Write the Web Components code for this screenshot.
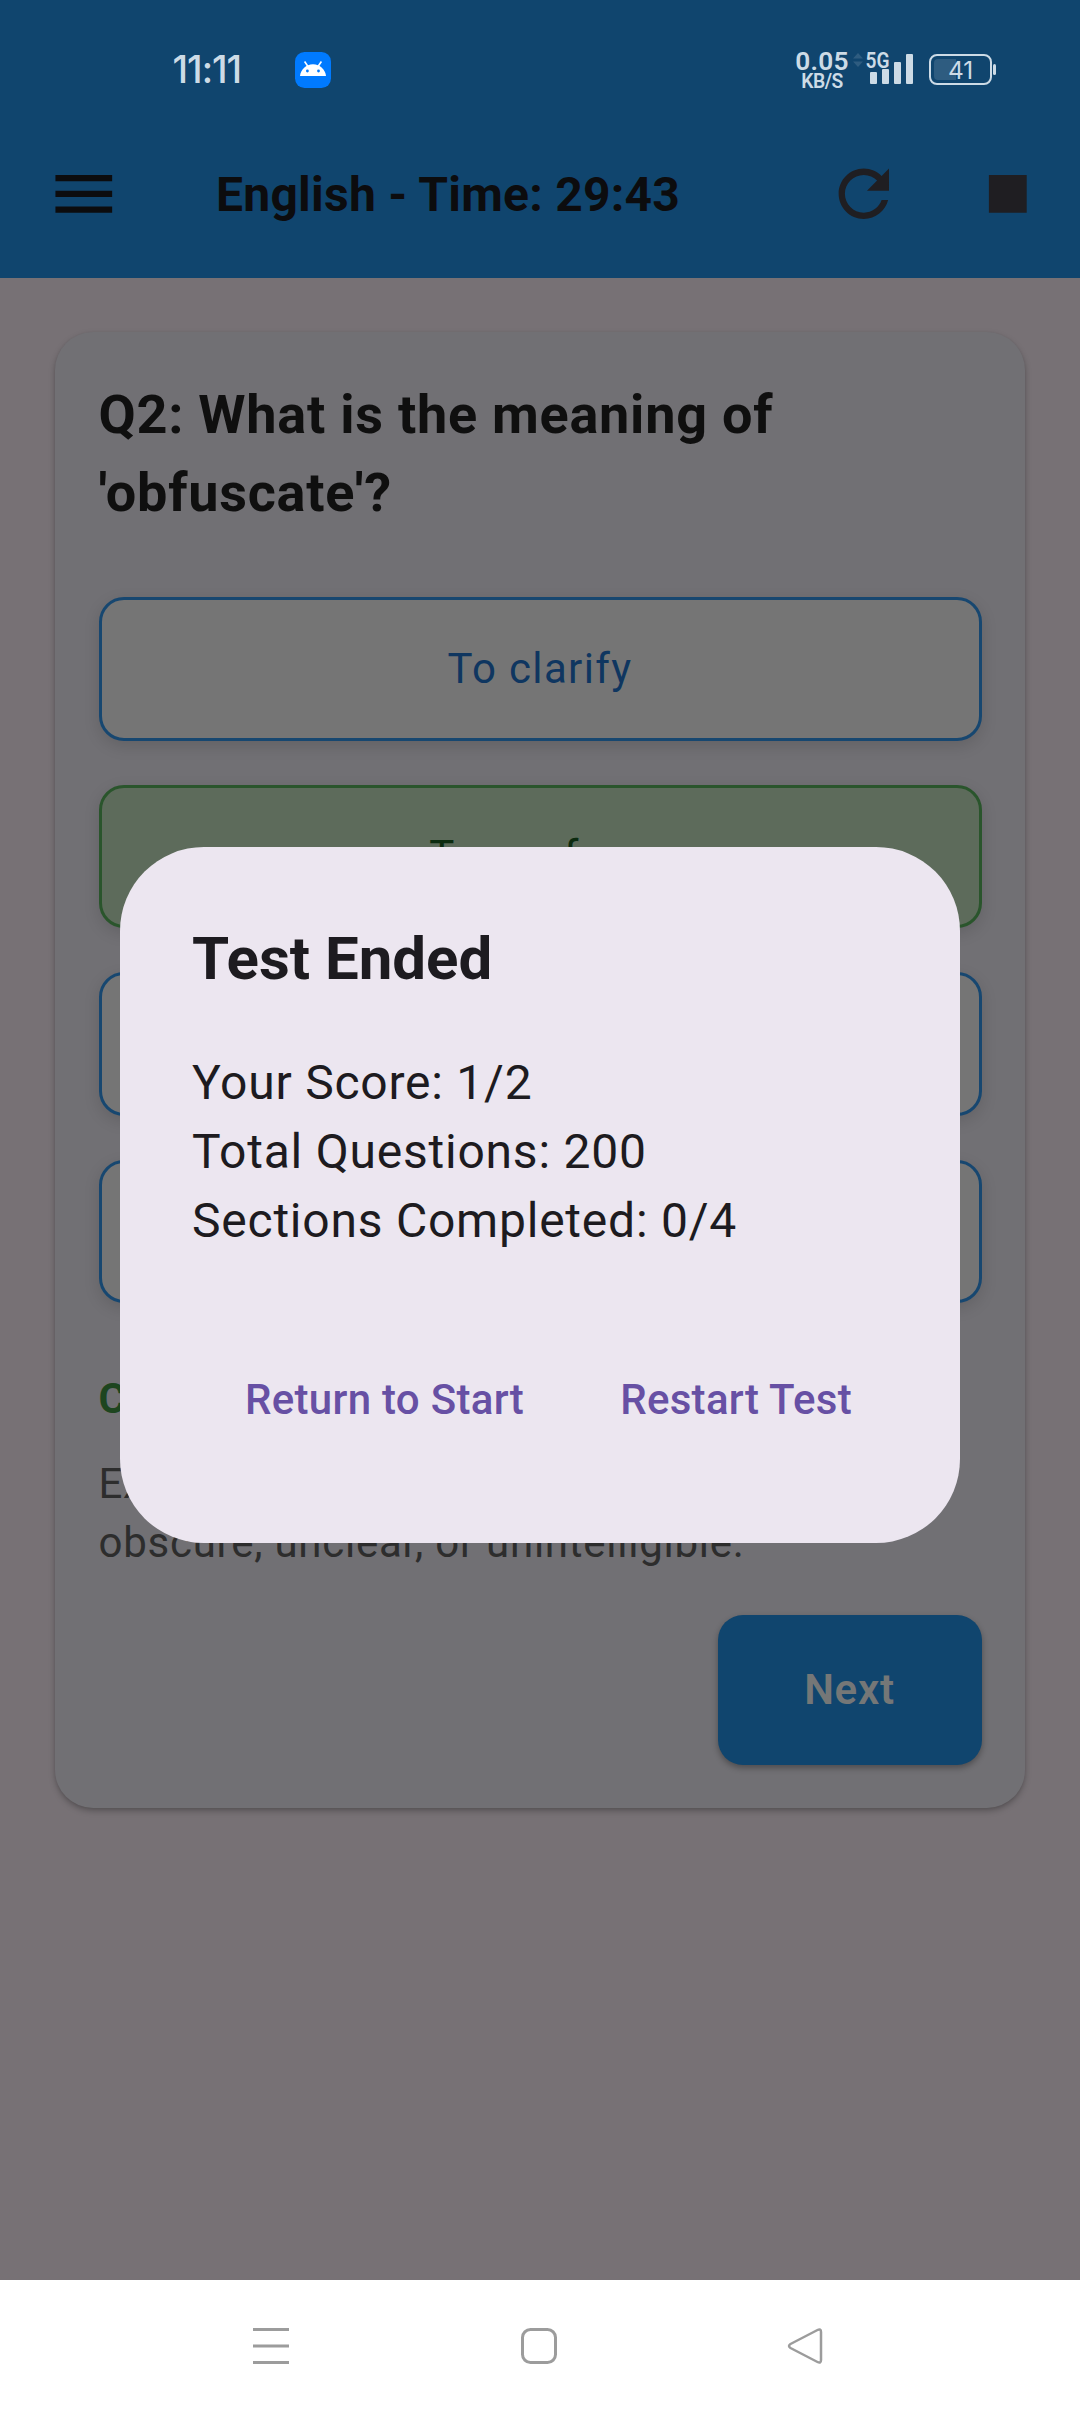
<!DOCTYPE html>
<html lang="en">
<head>
<meta charset="utf-8">
<title>English Test</title>
<style>
html, body { margin: 0; padding: 0; }
body { font-family: Roboto, "Liberation Sans", sans-serif; background: #777175; }
</style>
</head>
<body>
<quiz-screen></quiz-screen>
<script>
function define(name, html) {
  const template = document.createElement('template');
  template.innerHTML = html;
  customElements.define(name, class extends HTMLElement {
    constructor() {
      super();
      this.attachShadow({ mode: 'open' }).append(template.content.cloneNode(true));
    }
  });
}

define('status-bar', `
<style>
:host { display: flex; height: 118px; padding: 0 84px 0 172.500px; box-sizing: border-box; color: #cddbe6; align-items: flex-start; }
.time { font: 500 37.500px/44px Inter, sans-serif; letter-spacing: -1px; margin-top: 47.500px; width: 122.500px; white-space: nowrap; }
.app { width: 36px; height: 36px; margin-top: 51.500px; display: block; }
.speed { margin: 50px 0 0 auto; width: 52px; display: flex; flex-direction: column; align-items: center; font-weight: 600; }
.num { font-size: 26.300px; line-height: 22px; letter-spacing: .3px; }
.unit { font-size: 19.300px; line-height: 19px; letter-spacing: -.5px; font-weight: 600; }
.state { margin: 42px 0 0 4px; display: block; }
</style>
<span class="time">11:11</span>
<svg class="app" viewBox="0 0 36 36"><rect width="36" height="36" rx="9.500" fill="#007aff"/><path d="M5 24C5.700 17.500 11 12.300 18 12.300S30.300 17.500 31 24Z" fill="#fff"/><path d="M9.600 9.500l3.400 5M26.400 9.500l-3.400 5" stroke="#fff" stroke-width="1.600"/><circle cx="12.400" cy="19" r="1.400" fill="#007aff"/><circle cx="23.500" cy="19" r="1.400" fill="#007aff"/></svg>
<div class="speed"><span class="num">0.05</span><span class="unit">KB/S</span></div>
<svg class="state" width="144" height="50" viewBox="852 42 144 50" fill="#cddbe6">
  <path d="M853 58.500l5-5.500 5 5.500zM853 61.500l5 5.500 5-5.500z" fill="#2e5c80"/>
  <text x="865.600" y="67.600" font-size="22" font-weight="600" textLength="24" lengthAdjust="spacingAndGlyphs">5G</text>
  <rect x="870" y="72" width="7" height="12" rx="1"/><rect x="882" y="69" width="7" height="15" rx="1"/><rect x="894" y="62" width="7" height="22" rx="1"/><rect x="906" y="54" width="7" height="30" rx="1"/>
  <rect x="930" y="55" width="61" height="29" rx="7" fill="none" stroke="#cddbe6" stroke-width="2"/>
  <path d="M938 59h18v21h-18q-4 0-4-4v-13q0-4 4-4z" fill="#2e5c80"/>
  <rect x="993" y="64" width="3" height="11" rx="1.500"/>
  <text x="948" y="78.500" font-size="24.500" font-family="Inter, sans-serif">41</text>
</svg>`);

define('app-bar', `
<style>
:host { display: flex; align-items: center; height: 160px; padding: 0 34.500px 8px 46px; box-sizing: border-box; color: #1f1e22; }
svg { width: 75.600px; height: 75.600px; fill: currentColor; display: block; flex: none; }
.menu { color: #0c0c0e; }
h1 { flex: 1; margin: 2px 0 0 94.400px; font-size: 48px; line-height: 60px; font-weight: 700; letter-spacing: .25px; color: #0c0c0e; white-space: nowrap; }
.stop { margin-left: 68.400px; }
</style>
<svg class="menu" viewBox="0 0 24 24"><path d="M3 18h18v-2H3v2zm0-5h18v-2H3v2zm0-7v2h18V6H3z"/></svg>
<h1><slot></slot></h1>
<svg viewBox="0 0 24 24"><path d="M17.650 6.350C16.200 4.900 14.210 4 12 4c-4.420 0-7.990 3.580-7.990 8s3.570 8 7.990 8c3.730 0 6.840-2.550 7.730-6h-2.080c-.82 2.330-3.040 4-5.650 4-3.310 0-6-2.690-6-6s2.690-6 6-6c1.660 0 3.140.69 4.220 1.780L13 11h7V4l-2.350 2.350z"/></svg>
<svg class="stop" viewBox="0 0 24 24"><path d="M6 6h12v12H6z"/></svg>`);

define('answer-option', `
<style>
:host { display: flex; align-items: center; justify-content: center; height: 143.500px; padding-bottom: 1px; box-sizing: border-box; border: 3px solid #174770; border-radius: 25px; background: #757575; color: #0f3660; font-size: 42px; letter-spacing: 1.350px; box-shadow: 0 5px 16px rgba(0,0,0,.13); }
:host([correct]) { border-color: #2a552c; background: #5d6b5b; color: #0c2b10; }
</style><slot></slot>`);

define('question-card', `
<style>
:host { display: flex; flex-direction: column; margin: 54px 55px 0; padding: 43.500px 43.500px 43px 43.500px; background: #717074; border-radius: 38px; box-shadow: 0 3px 6px rgba(0,0,0,.26), 0 1px 3px rgba(0,0,0,.06); }
h2 { margin: 0 -20px 65.500px 0; font-size: 54px; line-height: 78px; font-weight: 700; letter-spacing: .75px; color: #0f0f0f; }
.options { display: flex; flex-direction: column; gap: 44px; }
.verdict { margin: 65.500px 0 25px; font-size: 42px; line-height: 60px; font-weight: 700; letter-spacing: .75px; color: #1d451f; }
.why { margin: 0 0 42.500px; font-size: 42px; line-height: 59.500px; letter-spacing: .75px; color: #2d2d2d; white-space: nowrap; }
.next { align-self: flex-end; width: 264px; height: 149.500px; padding-bottom: 0; box-sizing: border-box; display: flex; align-items: center; justify-content: center; background: #10456e; color: #757777; border-radius: 25px; font-size: 42px; font-weight: 600; letter-spacing: .75px; box-shadow: 0 3px 6px rgba(0,0,0,.32); }
</style>
<h2><slot name="question"></slot></h2>
<div class="options"><slot name="option"></slot></div>
<p class="verdict"><slot name="verdict"></slot></p>
<p class="why"><slot name="why"></slot></p>
<div class="next"><slot name="next"></slot></div>`);

define('result-dialog', `
<style>
:host { display: block; position: absolute; left: 120px; top: 847px; width: 840px; height: 696px; box-sizing: border-box; padding: 72px; border-radius: 84px; background: #ece6f0; color: #1d1b20; }
h3 { margin: 0 0 49px; font-size: 60px; line-height: 79px; font-weight: 700; }
.body { display: flex; flex-direction: column; margin-top: 50px; font-size: 48px; line-height: 69px; letter-spacing: .77px; }
.actions { display: flex; justify-content: flex-end; gap: 24px; margin-top: 72px; }
</style>
<h3><slot name="title"></slot></h3>
<div class="body"><slot></slot></div>
<div class="actions"><slot name="action"></slot></div>`);

define('text-button', `
<style>
:host { display: flex; align-items: center; height: 144px; padding: 0 36px; color: #6750a4; font-size: 42px; font-weight: 500; letter-spacing: .3px; white-space: nowrap; }
</style><slot></slot>`);

define('nav-bar', `
<style>
:host { display: flex; justify-content: space-between; align-items: center; height: 132px; padding: 0 254px 0 251px; box-sizing: border-box; background: #fff; }
svg { width: 40px; height: 40px; fill: none; stroke: #9c9c9c; stroke-width: 3; stroke-linejoin: round; }
</style>
<svg viewBox="0 0 40 40"><path d="M2 3.500h36M2 20h36M2 36.500h36"/></svg>
<svg viewBox="0 0 40 40"><rect x="3.500" y="3.500" width="33" height="33" rx="8"/></svg>
<svg viewBox="0 0 40 40"><path d="M31.500 4Q35 2.200 35 6V34Q35 37.800 31.500 36L4.500 22Q1.500 20 4.500 18Z" stroke-width="2.500"/></svg>`);

define('quiz-screen', `
<style>
:host { display: flex; flex-direction: column; position: relative; width: 1080px; height: 2412px; background: #777175; overflow: hidden; }
header { background: #10456e; display: flex; flex-direction: column; }
main { flex: 1; }
</style>
<header>
  <status-bar></status-bar>
  <app-bar>English - Time: 29:43</app-bar>
</header>
<main>
  <question-card>
    <span slot="question">Q2: What is the meaning of<br>'obfuscate'?</span>
    <answer-option slot="option">To clarify</answer-option>
    <answer-option slot="option" correct>To confuse</answer-option>
    <answer-option slot="option"></answer-option>
    <answer-option slot="option"></answer-option>
    <span slot="verdict">Correct!</span>
    <span slot="why">Explanation: Obfuscate means to make<br>obscure, unclear, or unintelligible.</span>
    <span slot="next">Next</span>
  </question-card>
</main>
<nav-bar></nav-bar>
<result-dialog>
  <span slot="title">Test Ended</span>
  <span>Your Score: 1/2</span>
  <span>Total Questions: 200</span>
  <span>Sections Completed: 0/4</span>
  <text-button slot="action">Return to Start</text-button>
  <text-button slot="action">Restart Test</text-button>
</result-dialog>`);
</script>
</body>
</html>
